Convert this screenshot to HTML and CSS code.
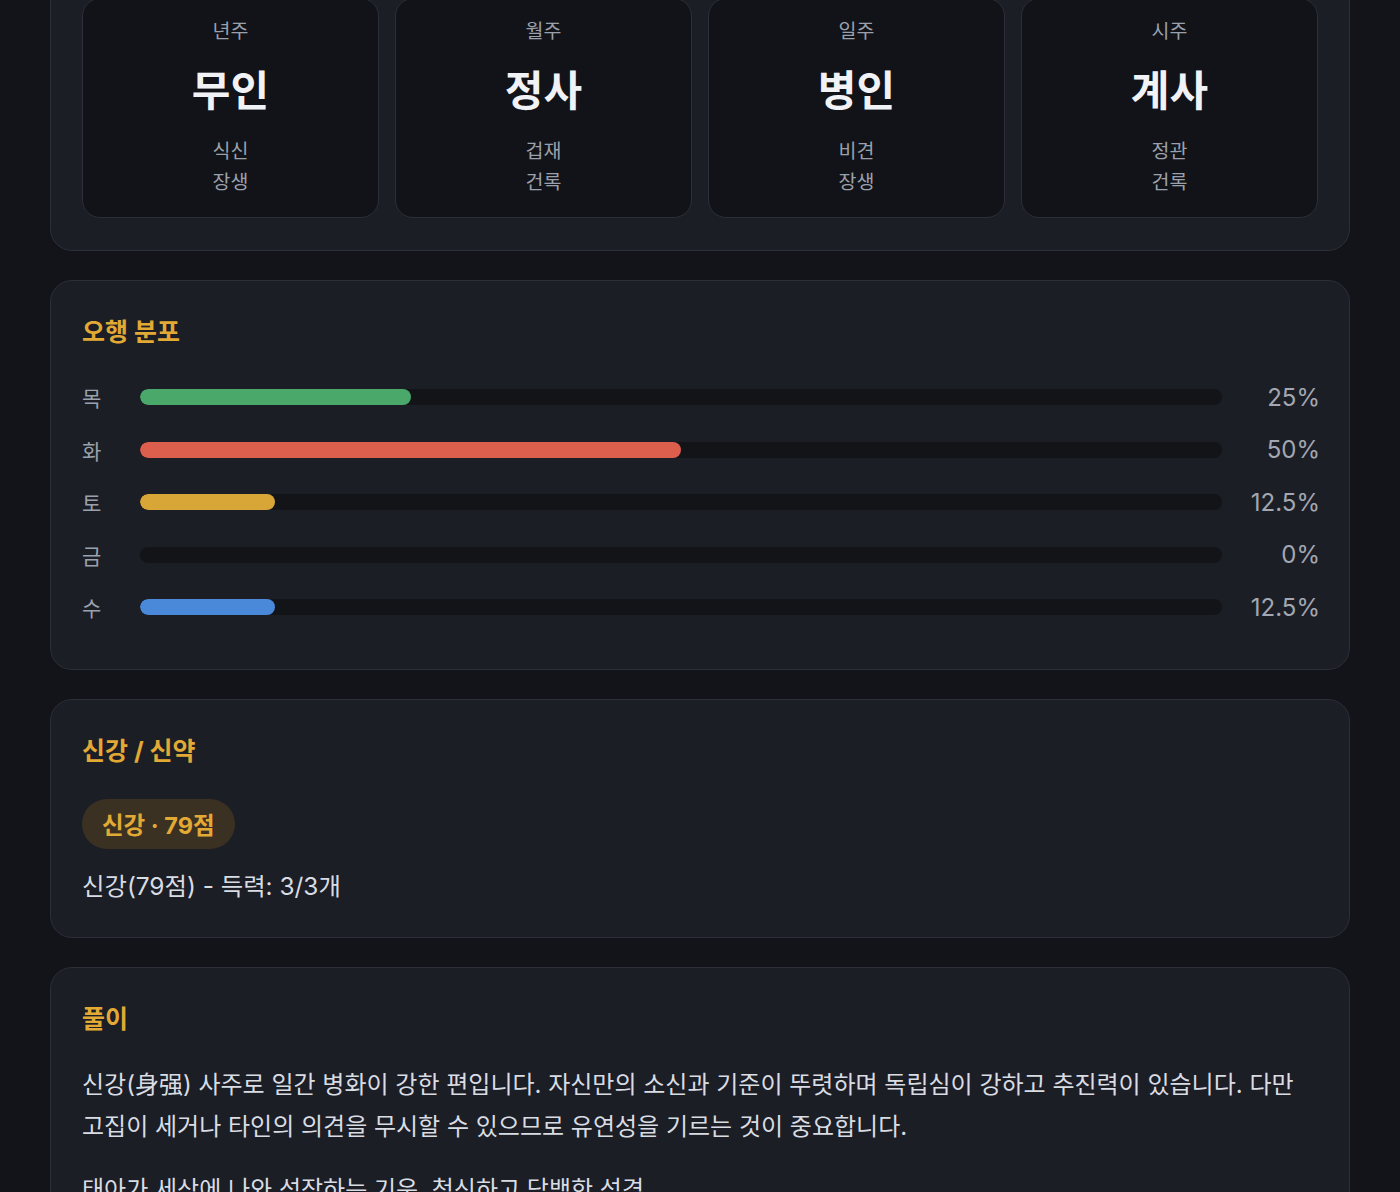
FILE: index.html
```html
<!DOCTYPE html>
<html lang="ko">
<head>
<meta charset="utf-8">
<title>사주 분석</title>
<link rel="stylesheet" href="styles.css">
</head>
<body>
<main class="page">
  <section class="card pillars-card">
    <div class="pillars">
      <div class="pillar">
        <div class="pillar-label">년주</div>
        <div class="pillar-main">무인</div>
        <div class="pillar-sub">식신</div>
        <div class="pillar-sub">장생</div>
      </div>
      <div class="pillar">
        <div class="pillar-label">월주</div>
        <div class="pillar-main">정사</div>
        <div class="pillar-sub">겁재</div>
        <div class="pillar-sub">건록</div>
      </div>
      <div class="pillar">
        <div class="pillar-label">일주</div>
        <div class="pillar-main">병인</div>
        <div class="pillar-sub">비견</div>
        <div class="pillar-sub">장생</div>
      </div>
      <div class="pillar">
        <div class="pillar-label">시주</div>
        <div class="pillar-main">계사</div>
        <div class="pillar-sub">정관</div>
        <div class="pillar-sub">건록</div>
      </div>
    </div>
  </section>

  <section class="card">
    <h2 class="card-title">오행 분포</h2>
    <div class="bars">
      <div class="bar-row">
        <span class="bar-label">목</span>
        <div class="track"><div class="fill fill-wood" style="width:25%"></div></div>
        <span class="bar-value">25%</span>
      </div>
      <div class="bar-row">
        <span class="bar-label">화</span>
        <div class="track"><div class="fill fill-fire" style="width:50%"></div></div>
        <span class="bar-value">50%</span>
      </div>
      <div class="bar-row">
        <span class="bar-label">토</span>
        <div class="track"><div class="fill fill-earth" style="width:12.5%"></div></div>
        <span class="bar-value">12.5%</span>
      </div>
      <div class="bar-row">
        <span class="bar-label">금</span>
        <div class="track"><div class="fill fill-metal" style="width:0%"></div></div>
        <span class="bar-value">0%</span>
      </div>
      <div class="bar-row">
        <span class="bar-label">수</span>
        <div class="track"><div class="fill fill-water" style="width:12.5%"></div></div>
        <span class="bar-value">12.5%</span>
      </div>
    </div>
  </section>

  <section class="card">
    <h2 class="card-title">신강 / 신약</h2>
    <div class="badge">신강 · 79점</div>
    <p class="strength-text">신강(79점) - 득력: 3/3개</p>
  </section>

  <section class="card">
    <h2 class="card-title">풀이</h2>
    <p class="reading">신강(身强) 사주로 일간 병화이 강한 편입니다. 자신만의 소신과 기준이 뚜렷하며 독립심이 강하고 추진력이 있습니다. 다만 고집이 세거나 타인의 의견을 무시할 수 있으므로 유연성을 기르는 것이 중요합니다.</p>
    <p class="reading">태아가 세상에 나와 성장하는 기운. 청신하고 담백한 성격</p>
  </section>
</main>
</body>
</html>
```

FILE: styles.css
```css
* {
  box-sizing: border-box;
}

html, body {
  margin: 0;
  padding: 0;
  background: #131419;
}

body {
  font-family: Inter, "Noto Sans CJK KR", "Noto Sans", sans-serif;
  color: #d9dce3;
  word-break: keep-all;
}

.page {
  width: 1300px;
  margin: -35px auto 0;
  display: flex;
  flex-direction: column;
  gap: 29px;
}

.card {
  background: #1c1e26;
  border: 1px solid #2c2f39;
  border-radius: 22px;
  padding: 32px 31px;
}

.pillars {
  display: grid;
  grid-template-columns: repeat(4, 1fr);
  gap: 16px;
}

.pillar {
  background: #121318;
  border: 1px solid #2c2f39;
  border-radius: 18px;
  padding: 20px 16px 19px;
  display: flex;
  flex-direction: column;
  align-items: center;
  text-align: center;
}

.pillar-label {
  font-size: 19.5px;
  line-height: 24px;
  color: #9ba1ac;
}

.pillar-main {
  margin-top: 22px;
  margin-bottom: 19px;
  font-size: 42px;
  line-height: 52px;
  font-weight: 700;
  color: #f1f2f5;
}

.pillar-sub {
  font-size: 19.5px;
  line-height: 31px;
  color: #9ba1ac;
}

.card-title {
  margin: 0;
  font-size: 25px;
  line-height: 38px;
  font-weight: 700;
  color: #e2a935;
}

.bars {
  margin-top: 30px;
  margin-bottom: 14px;
  display: flex;
  flex-direction: column;
  gap: 20.5px;
}

.bar-row {
  display: grid;
  grid-template-columns: 40px 1fr 78px;
  gap: 18px;
  align-items: center;
  height: 32px;
}

.bar-label {
  font-size: 21px;
  color: #9ba1ac;
}

.track {
  height: 16px;
  border-radius: 8px;
  background: #131418;
  overflow: hidden;
}

.fill {
  height: 100%;
  border-radius: 8px;
}

.fill-wood { background: #4aa86b; }
.fill-fire { background: #dc5e4c; }
.fill-earth { background: #d7a637; }
.fill-metal { background: #c9ccd3; }
.fill-water { background: #4a88da; }

.bar-value {
  text-align: right;
  font-size: 24px;
  color: #a2a7b1;
  margin-right: -2px;
}

.badge {
  display: inline-flex;
  align-self: flex-start;
  align-items: center;
  margin-top: 29px;
  height: 50px;
  padding: 0 20px;
  border-radius: 25px;
  background: #3a3123;
  color: #e2a935;
  font-size: 23.5px;
  font-weight: 700;
}

.strength-text {
  margin: 18px 0 0;
  font-size: 24.4px;
  line-height: 38px;
  color: #d9dce3;
}

.reading {
  margin: 21px 0 0;
  font-size: 24px;
  line-height: 42px;
  color: #d9dce3;
}

.card-title + .reading {
  margin-top: 26px;
}
```
